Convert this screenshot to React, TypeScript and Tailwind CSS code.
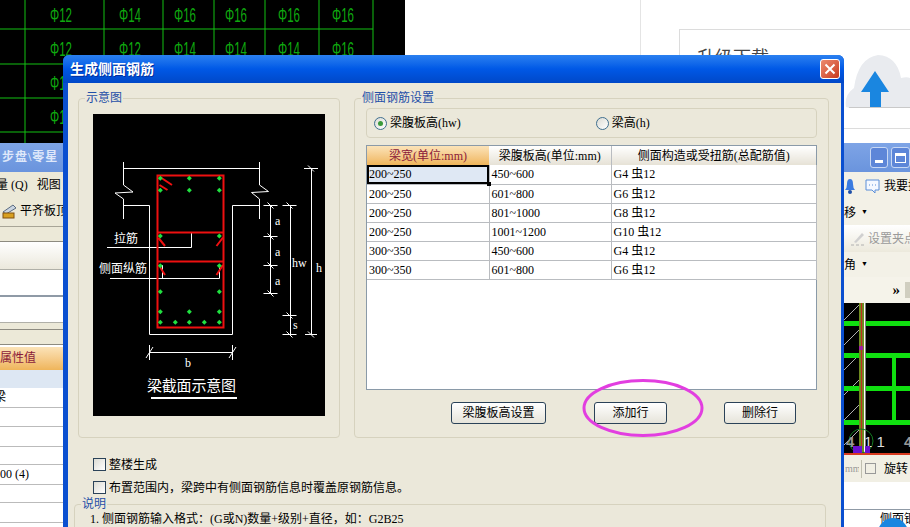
import React from 'react'

const font = "font-['Liberation_Serif','Noto_Sans_CJK_SC',serif]"

const rows = [
    ['200~250', '450~600', 'G4 虫12'],
    ['200~250', '601~800', 'G6 虫12'],
    ['200~250', '801~1000', 'G8 虫12'],
    ['200~250', '1001~1200', 'G10 虫12'],
    ['300~350', '450~600', 'G4 虫12'],
    ['300~350', '601~800', 'G6 虫12'],
]

const cadRows = [
    ['Φ12', 'Φ14', 'Φ16', 'Φ16', 'Φ16', 'Φ16'],
    ['Φ12', 'Φ12', 'Φ14', 'Φ14', 'Φ14', 'Φ16'],
    ['Φ12', 'Φ12', 'Φ14', 'Φ14', 'Φ14', 'Φ14'],
    ['Φ12', 'Φ12', 'Φ12', 'Φ12', 'Φ12', 'Φ12'],
]
const cadX = [50, 119, 174, 225, 278, 332]

const CadPlan = () => (
    <svg className="absolute left-0 top-0" width="405" height="143" viewBox="0 0 405 143">
        <rect width="405" height="143" fill="#000" />
        {[25, 104, 163, 214, 265, 319, 373].map((x) => (
            <line key={x} x1={x} y1="0" x2={x} y2="143" stroke="#12c012" />
        ))}
        {[29, 64, 98, 132].map((y) => (
            <line key={y} x1="0" y1={y} x2="373" y2={y} stroke="#12c012" />
        ))}
        {cadRows.map((row, r) =>
            row.map((t, c) => (
                <text key={`${r}-${c}`} x={cadX[c]} y={22 + r * 34} fontSize="20" fill="#0fa80f" fontFamily="Liberation Sans" textLength="22" lengthAdjust="spacingAndGlyphs">
                    {t}
                </text>
            ))
        )}
    </svg>
)

// left-hand window peeking out behind the dialog
const LeftWindow = () => (
    <div className={`absolute left-0 top-[143px] w-[64px] h-[384px] overflow-hidden bg-white text-[12px] text-black ${font}`}>
        <div className="h-[29px] bg-gradient-to-b from-[#7ea4e6] to-[#6a94dd] text-[#dfe8fa] font-bold text-[12px] tracking-[1px] leading-[29px] pl-[2px] whitespace-nowrap">步盘\零星</div>
        <div className="h-[21px] bg-[#ece9d8] leading-[26px] whitespace-nowrap -ml-[4px] flex">
            <span>量&nbsp;(Q)</span>
            <span className="ml-[9px]">视图</span>
        </div>
        <div className="h-[34px] pt-[2px] bg-[#ece9d8] border-b border-[#a8a597] flex items-center whitespace-nowrap">
            <svg width="16" height="16" viewBox="0 0 16 16" className="ml-[1px] shrink-0">
                <path d="M2 9 L12 2 L15 5 L5 11 Z" fill="#c9d4e0" stroke="#5a6a80" />
                <rect x="2" y="10" width="11" height="5" fill="#d8a020" stroke="#805010" />
            </svg>
            <span className="ml-[3px]">平齐板顶</span>
        </div>
        <div className="h-[15px] bg-[#ece9d8] border-b border-[#8d8b80]" />
        <div className="h-[28px] bg-gradient-to-b from-white to-[#ebe8dc] border-b border-[#b0b0a8]" />
        <div className="h-[25px] bg-white" />
        <div className="h-[2px] bg-[#8f9aa6]" />
        <div className="h-[26px] bg-white border-b border-[#b0b0a8]" />
        <div className="h-[7px] bg-[#ece9d8] border-b border-[#8d8b80]" />
        <div className="h-[15px] bg-[#ece9d8] border-b border-[#8d8b80]" />
        <div className="h-[23px] mt-[2px] bg-gradient-to-b from-[#fbe3b8] to-[#efb55a] text-[#8b1a3a] leading-[23px]">属性值</div>
        <div className="h-[18px] bg-[#dde7f3]" />
        <div className="h-[20px] border-b border-[#bbb] -ml-[6px] leading-[18px]">梁</div>
        <div className="h-[19px] border-b border-[#bbb]" />
        <div className="h-[20px] border-b border-[#bbb]" />
        <div className="h-[18px] border-b border-[#bbb]" />
        <div className="h-[20px] border-b border-[#bbb] leading-[19px]">00 (4)</div>
        <div className="h-[18px] border-b border-[#bbb]" />
        <div className="h-[20px] border-b border-[#bbb]" />
    </div>
)

const RightCad = () => (
    <svg width="66" height="150" viewBox="844 303 66 150" className="block">
        <rect x="844" y="303" width="66" height="150" fill="#000" />
        {[320, 345, 370, 395, 420, 445, 470].map((y) => (
            <line key={y} x1="844" y1={y} x2="860" y2={y - 16} stroke="#ddd" strokeWidth="0.8" />
        ))}
        {[323, 355, 388, 422].map((y) => (
            <g key={y}>
                <rect x="844" y={y - 2} width="16" height="5" fill="#10e010" />
                <rect x="866" y={y - 2} width="44" height="5" fill="#10e010" />
            </g>
        ))}
        <rect x="859" y="303" width="5" height="150" fill="#6e8a20" />
        <rect x="861" y="303" width="1" height="150" fill="#c03020" />
        <rect x="864" y="303" width="1.5" height="150" fill="#fff" />
        <rect x="892" y="355" width="4" height="67" fill="#10e010" />
        <rect x="859" y="346" width="4" height="4" fill="#a020a0" />
        <circle cx="861" cy="441" r="12" fill="none" stroke="#127a20" />
        <text x="846" y="447" fontSize="15" fill="#999" fontFamily="Liberation Sans" fontWeight="bold">4</text>
        <text x="864" y="447" fontSize="15" fill="#ddd" fontFamily="Liberation Sans">1 1</text>
        <text x="904" y="447" fontSize="15" fill="#999" fontFamily="Liberation Sans" fontWeight="bold">4</text>
        <rect x="853" y="446" width="9" height="7" fill="#6a10d0" />
        <rect x="865" y="446" width="5" height="7" fill="#6a10d0" />
    </svg>
)

const RightWindow = () => (
    <div className={`absolute left-[844px] top-[143px] w-[66px] h-[384px] overflow-hidden bg-white text-[12px] text-black ${font}`}>
        <div className="h-[29px] bg-gradient-to-b from-[#7ea4e6] to-[#6a94dd] flex items-center pl-[26px] gap-[3px]">
            <div className="w-[19px] h-[21px] rounded-[3px] border border-[#c8d8f4] bg-[#5d86d8] flex items-end justify-center pb-[4px]">
                <div className="w-[8px] h-[3px] bg-white" />
            </div>
            <div className="w-[19px] h-[21px] shrink-0 rounded-[3px] border border-[#c8d8f4] bg-[#5d86d8] flex items-center justify-center">
                <div className="w-[11px] h-[10px] border border-white border-t-[3px]" />
            </div>
        </div>
        <div className="h-[28px] bg-[#f3f1e7] flex items-center whitespace-nowrap">
            <svg width="12" height="16" viewBox="0 0 12 16" className="shrink-0">
                <path d="M1 12 Q3 10 3 6 Q3 1 6 1 Q9 1 9 6 Q9 10 11 12 Z" fill="#3a7be0" />
                <circle cx="6" cy="14" r="2" fill="#1f50a8" />
            </svg>
            <svg width="17" height="17" viewBox="0 0 17 17" className="ml-[8px] shrink-0">
                <path d="M2 2 H15 V12 H11 L11 15 L8 12 H2 Z" fill="#f4f8ff" stroke="#5a8ed8" />
                <path d="M5 7 H6 M8 7 H9 M11 7 H12" stroke="#5a8ed8" />
            </svg>
            <span className="ml-[3px]">我要搜</span>
        </div>
        <div className="h-[25px] bg-[#f3f1e7] flex items-center">
            <span>移</span>
            <span className="ml-[5px] text-[7px]">▼</span>
        </div>
        <div className="h-[27px] bg-gradient-to-b from-white to-[#ece9dc] flex items-center text-[#9a9a9a] whitespace-nowrap">
            <svg width="16" height="16" viewBox="0 0 16 16" className="ml-[6px] shrink-0">
                <path d="M4 11 L12 2 L14 4 L6 12 Z" fill="#d0d0d0" />
                <path d="M1 14 H15" stroke="#b0b0b0" strokeDasharray="3 2" />
            </svg>
            <span className="ml-[2px]">设置夹点</span>
        </div>
        <div className="h-[25px] bg-[#f3f1e7] flex items-center">
            <span>角</span>
            <span className="ml-[5px] text-[7px]">▼</span>
        </div>
        <div className="h-[26px] bg-[#f5f3ea] flex items-center justify-end font-bold">
            <span className="text-[15px]">»</span>
            <div className="ml-[5px] w-[5px] h-[16px] bg-[#d0cec0]" />
        </div>
        <RightCad />
        <div className="h-[2px] bg-[#d83a20]" />
        <div className="h-[27px] bg-[#f1efe4] flex items-center whitespace-nowrap">
            <span className="text-[#999] text-[10px] ml-[1px] w-[14px] overflow-hidden">mm</span>
            <div className="w-px h-[18px] bg-[#c0bfb0] ml-[2px]" />
            <div className="w-[11px] h-[11px] border border-[#999] ml-[3px]" />
            <span className="ml-[8px]">旋转</span>
        </div>
        <div className="h-[28px] bg-white border-b border-[#8f9aa6]" />
        <div className="relative h-[20px] bg-white pl-[36px] leading-[18px] whitespace-nowrap overflow-hidden">
            侧面钢
            <div className="absolute left-[34px] top-[8px] w-[30px] h-[30px] rounded-full bg-[#1a86e0]" />
        </div>
    </div>
)

const Cloud = () => (
    <svg className="absolute left-[844px] top-[55px]" width="66" height="54" viewBox="844 55 66 54">
        <path d="M846 107 Q844 95 854 88 Q858 58 878 55 Q897 56 901 78 Q910 76 912 80 V108 H850 Z" fill="#e9ebef" />
        <path d="M849 107.5 H910" stroke="#c9c9c9" />
        <path d="M875 71 L889 92 H881 V107 H870 V92 H861 Z" fill="#1a86e0" />
    </svg>
)

// the beam section sketch, drawn in page coordinates
const BeamSection = () => {
    const dots = [
        [160.3, 178.3], [189.3, 178.3], [219.3, 178.3],
        [160.3, 190.3], [189.3, 190.3], [219.3, 190.3],
        [160.3, 236], [219.3, 236],
        [160.3, 265.7], [219.3, 265.7],
        [160.3, 291.7], [219.3, 291.7],
        [160.3, 311.7], [189.3, 311.7], [219.3, 311.7],
        [160.3, 322.3], [175.3, 322.3], [189.3, 322.3], [204.3, 322.3], [219.3, 322.3],
    ]
    const tick = (x: number, y: number, w: number) => (
        <g key={`${x}-${y}`}>
            <line x1={x - w} y1={y} x2={x + w} y2={y} />
            <line x1={x - 3} y1={y - 3} x2={x + 3} y2={y + 3} />
        </g>
    )
    return (
        <svg width="232" height="302" viewBox="93 114 232 302" className="block bg-black">
            <g stroke="#fff" strokeWidth="1" fill="none">
                <line x1="123.5" y1="168.5" x2="259.5" y2="168.5" />
                <path d="M123.5 162 V185 L133 192 L115 193 L123.5 199 V219" />
                <path d="M259.5 162 V185 L268.5 191.5 L251.5 192.5 L259.5 199 V219" />
                <path d="M123.5 205.5 H149.5 V334.5 H232.5 V205.5 H259.5" />
                <path d="M107 247.5 H191.5 V233" />
                <path d="M110 278.5 H219.5 V265" />
                <path d="M162.5 265 V278" />
                <line x1="270.5" y1="205" x2="270.5" y2="293" />
                <line x1="290.5" y1="205" x2="290.5" y2="335" />
                <line x1="311.5" y1="168" x2="311.5" y2="335" />
                {tick(270.5, 205.5, 7)}
                {tick(270.5, 236.5, 7)}
                {tick(270.5, 265.5, 7)}
                {tick(270.5, 293.5, 7)}
                {tick(289.5, 205.5, 7)}
                {tick(289.5, 315.5, 7)}
                {tick(289.5, 334.5, 7)}
                {tick(311, 168.5, 7)}
                {tick(311, 334.5, 6)}
                <path d="M149.5 345 V360 M232.5 345 V360 M149.5 352.5 H232.5 M146 358 L153 347 M229 358 L236 347" />
            </g>
            <g stroke="#ee1010" fill="none">
                <rect x="157.5" y="175.5" width="66" height="152" strokeWidth="2" />
                <path d="M157 232.5 H223 M157 261.5 H223" strokeWidth="2" />
                <path d="M160 177 L172 185 M159.5 185 L167.5 190 M158.5 238 L165 246 M223 237.5 L216.5 246 M160 267 L165 275 M223 265 L216.5 275" strokeWidth="2" />
            </g>
            {dots.map(([x, y]) => (
                <path key={`${x}-${y}`} d={`M${x} ${y - 2.5} L${x + 2.5} ${y} L${x} ${y + 2.5} L${x - 2.5} ${y} Z`} fill="#20e040" />
            ))}
            <g fill="#fff" fontFamily="Noto Sans CJK SC">
                <text x="114" y="243" fontSize="12">拉筋</text>
                <text x="99" y="273" fontSize="12">侧面纵筋</text>
                <text x="147" y="391" fontSize="15" textLength="89">梁截面示意图</text>
            </g>
            <g fill="#fff" fontFamily="Liberation Serif" fontSize="12">
                <text x="275" y="225">a</text>
                <text x="275" y="256">a</text>
                <text x="275" y="285">a</text>
                <text x="292" y="267">hw</text>
                <text x="316" y="272">h</text>
                <text x="293" y="329">s</text>
                <text x="185" y="367">b</text>
            </g>
            <line x1="151" y1="398" x2="237" y2="398" stroke="#fff" strokeWidth="2" />
        </svg>
    )
}

const Button = ({ label, width }: { label: string; width: string }) => (
    <button className={`${width} h-[22px] rounded-[3px] border border-[#2a4258] bg-gradient-to-b from-white to-[#e6e4da] text-[12px] text-black`}>
        {label}
    </button>
)

const Radio = ({ label, checked }: { label: string; checked?: boolean }) => (
    <div className="flex items-center">
        <div className="w-[13px] h-[13px] rounded-full border border-[#3f6f8f] bg-gradient-to-br from-[#dcdcd4] to-white flex items-center justify-center">
            {checked && <div className="w-[5px] h-[5px] rounded-full bg-[#3a9a3a]" />}
        </div>
        <span className="ml-[3px]">{label}</span>
    </div>
)

const Check = ({ label }: { label: string }) => (
    <div className="flex items-center h-[13px]">
        <div className="w-[13px] h-[13px] border border-[#2a4258] bg-gradient-to-br from-[#dcdcd4] to-white" />
        <span className="ml-[3px]">{label}</span>
    </div>
)

const Group = ({ title, className, children }: { title: string; className: string; children: React.ReactNode }) => (
    <div className={`relative rounded-[4px] border border-[#d6d2be] ${className}`}>
        <span className="absolute left-[6px] -top-[8px] bg-[#ebe8da] px-px text-[12px] leading-[14px] text-[#1f4fa8]">{title}</span>
        {children}
    </div>
)

const Dialog = () => (
    <div className={`absolute left-[63px] top-[55px] w-[781px] h-[472px] rounded-t-[6px] overflow-hidden flex flex-col bg-[#0a4fd0] text-[12px] text-black ${font}`}>
        <div className="h-[28px] shrink-0 bg-gradient-to-b from-[#2a80f0] via-[#0058e6] to-[#0048c8] flex items-center justify-between pl-[7px] pr-[4px]">
            <span className="text-white font-bold text-[14px] [text-shadow:1px_1px_0_#0030a0]">生成侧面钢筋</span>
            <div className="w-[20px] h-[20px] rounded-[3px] border border-white bg-gradient-to-br from-[#ec8a70] to-[#c8381a] flex items-center justify-center">
                <svg width="12" height="12" viewBox="0 0 12 12">
                    <path d="M1.5 1.5 L10.5 10.5 M10.5 1.5 L1.5 10.5" stroke="#fff" strokeWidth="2" />
                </svg>
            </div>
        </div>
        <div className="mr-[3px] ml-[5px] flex-1 bg-[#ebe8da] pl-[10px] pr-[11px] pt-[15px]">
            <div className="flex gap-[14px] h-[340px]">
                <Group title="示意图" className="w-[262px] shrink-0 pl-[14px] pt-[15px]">
                    <BeamSection />
                </Group>
                <Group title="侧面钢筋设置" className="w-[475px] shrink-0 pl-[11px] pt-[9px]">
                    <div className="w-[451px] h-[30px] rounded-[4px] border border-[#d6d2be] flex items-center pl-[7px]">
                        <Radio label="梁腹板高(hw)" checked />
                        <div className="w-[135px]" />
                        <Radio label="梁高(h)" />
                    </div>
                    <div className="mt-[7px] w-[451px] h-[245px] border border-[#8a9aa8] bg-white">
                        <table className="table-fixed border-collapse w-[449px]">
                            <colgroup>
                                <col className="w-[122px]" />
                                <col className="w-[122px]" />
                                <col className="w-[205px]" />
                            </colgroup>
                            <thead>
                                <tr className="h-[19px] text-center font-normal">
                                    <th className="p-0 font-normal bg-gradient-to-b from-[#fbe3b8] to-[#efb55a] text-[#8b1a3a]">梁宽(单位:mm)</th>
                                    <th className="p-0 font-normal bg-gradient-to-b from-white to-[#e6e2d6] border-r border-[#b9bcc0]">梁腹板高(单位:mm)</th>
                                    <th className="p-0 font-normal bg-gradient-to-b from-white to-[#e6e2d6]">侧面构造或受扭筋(总配筋值)</th>
                                </tr>
                            </thead>
                            <tbody>
                                {rows.map((row, i) => (
                                    <tr key={i} className="h-[19px]">
                                        {row.map((cell, j) => {
                                            const selected = i === 0 && j === 0
                                            return (
                                                <td
                                                    key={j}
                                                    className={`relative p-0 pl-[2px] leading-[18px] border-b border-r border-[#b9bcc0] ${selected ? 'bg-[#dfe8f4] outline-2 -outline-offset-2 outline-black' : ''}`}
                                                >
                                                    {cell}
                                                    {selected && <div className="absolute -right-[2px] -bottom-[2px] w-[4px] h-[4px] bg-black" />}
                                                </td>
                                            )
                                        })}
                                    </tr>
                                ))}
                            </tbody>
                        </table>
                    </div>
                    <div className="mt-[12px] flex pl-[85px]">
                        <Button label="梁腹板高设置" width="w-[95px]" />
                        <div className="w-[48px]" />
                        <Button label="添加行" width="w-[73px]" />
                        <div className="w-[57px]" />
                        <Button label="删除行" width="w-[72px]" />
                    </div>
                </Group>
            </div>
            <div className="mt-[20px] ml-[15px] flex flex-col gap-[10px]">
                <Check label="整楼生成" />
                <Check label={'布置范围内\uFF0C梁跨中有侧面钢筋信息时覆盖原钢筋信息\u3002'} />
            </div>
            <Group title="说明" className="mt-[10px] -ml-[4px] mr-[4px] h-[60px] pl-[15px] pt-[7px]">
                <div className="leading-[14px]">{'1. 侧面钢筋输入格式\uFF1A(G或N)数量+级别+直径\uFF0C如\uFF1AG2B25'}</div>
            </Group>
        </div>
    </div>
)

const App = () => (
    <div className={`relative w-[910px] h-[527px] overflow-hidden bg-white ${font}`}>
        <CadPlan />
        <div className="absolute left-[640px] top-0 w-px h-[56px] bg-[#e4e4e4]" />
        <div className="absolute left-[679px] top-[29px] w-[240px] h-[100px] border border-[#dcdcdc] pl-[17px] pt-[15px] text-[18px] text-[#444]">
            升级下载
        </div>
        <Cloud />
        <LeftWindow />
        <RightWindow />
        <Dialog />
        <svg className="absolute left-[580px] top-[377px]" width="126" height="62" viewBox="580 377 126 62">
            <ellipse cx="643" cy="408" rx="59" ry="27.5" fill="none" stroke="#e23ee0" strokeWidth="3" />
        </svg>
    </div>
)

export default App
